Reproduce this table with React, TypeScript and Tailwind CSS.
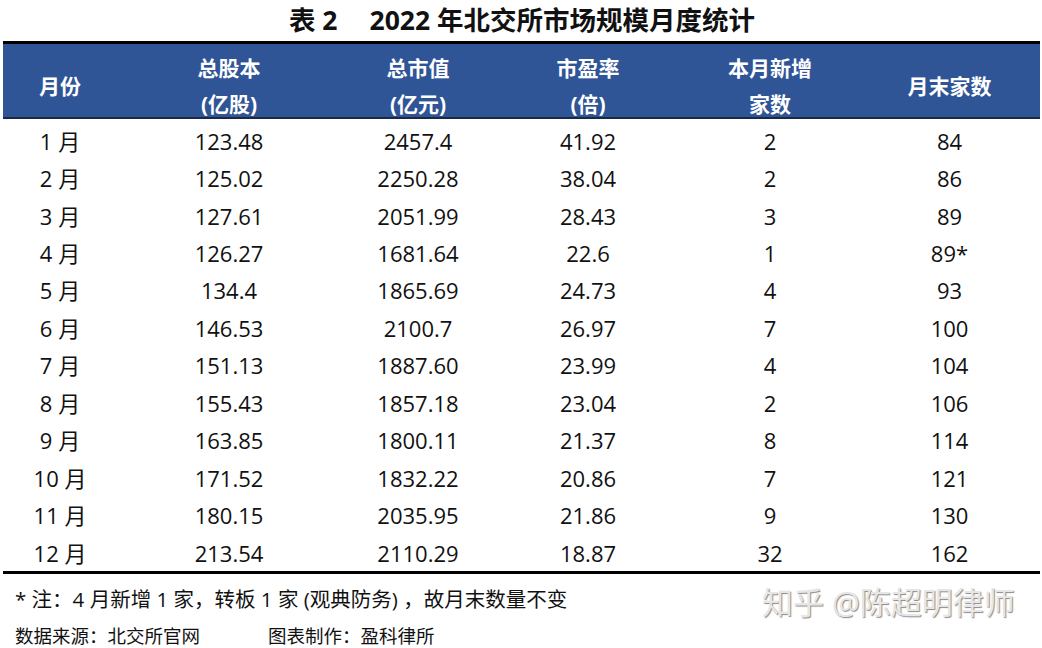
const rows = [
  ["1 月", "123.48", "2457.4", "41.92", "2", "84"],
  ["2 月", "125.02", "2250.28", "38.04", "2", "86"],
  ["3 月", "127.61", "2051.99", "28.43", "3", "89"],
  ["4 月", "126.27", "1681.64", "22.6", "1", "89*"],
  ["5 月", "134.4", "1865.69", "24.73", "4", "93"],
  ["6 月", "146.53", "2100.7", "26.97", "7", "100"],
  ["7 月", "151.13", "1887.60", "23.99", "4", "104"],
  ["8 月", "155.43", "1857.18", "23.04", "2", "106"],
  ["9 月", "163.85", "1800.11", "21.37", "8", "114"],
  ["10 月", "171.52", "1832.22", "20.86", "7", "121"],
  ["11 月", "180.15", "2035.95", "21.86", "9", "130"],
  ["12 月", "213.54", "2110.29", "18.87", "32", "162"],
];

const headers: string[][] = [
  ["月份"],
  ["总股本", "(亿股)"],
  ["总市值", "(亿元)"],
  ["市盈率", "(倍)"],
  ["本月新增", "家数"],
  ["月末家数"],
];

const cols = "grid grid-cols-[114px_224px_154px_186px_178px_181px]";

export default function App() {
  return (
    <div className="w-[1042px] h-[648px] bg-white font-['Open_Sans','Noto_Sans_CJK_SC',sans-serif] text-[#111] overflow-hidden">
      {/* Title */}
      <div className="h-[41px] flex items-center justify-center pl-[2px]">
        <h1 className="text-[26.5px] font-bold leading-none text-[#111]">
          表 2<span className="inline-block w-[32px]" />2022 年北交所市场规模月度统计
        </h1>
      </div>

      <div className="mx-[3px] w-[1037px]">
        {/* Header */}
        <div className={`${cols} border-t-[3px] border-black border-b-2 border-b-[#1a2a44] bg-[#2f5597] h-[78px] pt-[6px]`}>
          {headers.map((h, i) => (
            <div key={i} className="flex flex-col items-center justify-center text-white font-bold text-[21px] leading-[36px]">
              {h.map((line, j) => (
                <span key={j}>{line}</span>
              ))}
            </div>
          ))}
        </div>

        {/* Body */}
        <div className="pt-[3px] border-b-[3px] border-black">
          {rows.map((r, i) => (
            <div key={i} className={`${cols} h-[37.45px] items-center text-[22px] leading-none`}>
              {r.map((c, j) => (
                <div key={j} className="text-center">
                  {c}
                </div>
              ))}
            </div>
          ))}
        </div>
      </div>

      {/* Notes */}
      <div className="relative">
        <div className="pl-[15px] pt-[12px] text-[20.5px] leading-[26px] text-[#111]">
          *&nbsp;注：4 月新增 1 家，转板 1 家 (观典防务) ，故月末数量不变
        </div>
        <div className="pl-[15px] pt-[11px] text-[18.5px] leading-[26px] text-[#111]">
          数据来源：北交所官网<span className="inline-block w-[68px]" />图表制作：盈科律所
        </div>
        <div className="absolute left-[762px] top-[13px] text-[31px] leading-none text-[#e6e6e6] [text-shadow:1px_1px_1px_#8a8a8a]">
          知乎 @陈超明律师
        </div>
      </div>
    </div>
  );
}
